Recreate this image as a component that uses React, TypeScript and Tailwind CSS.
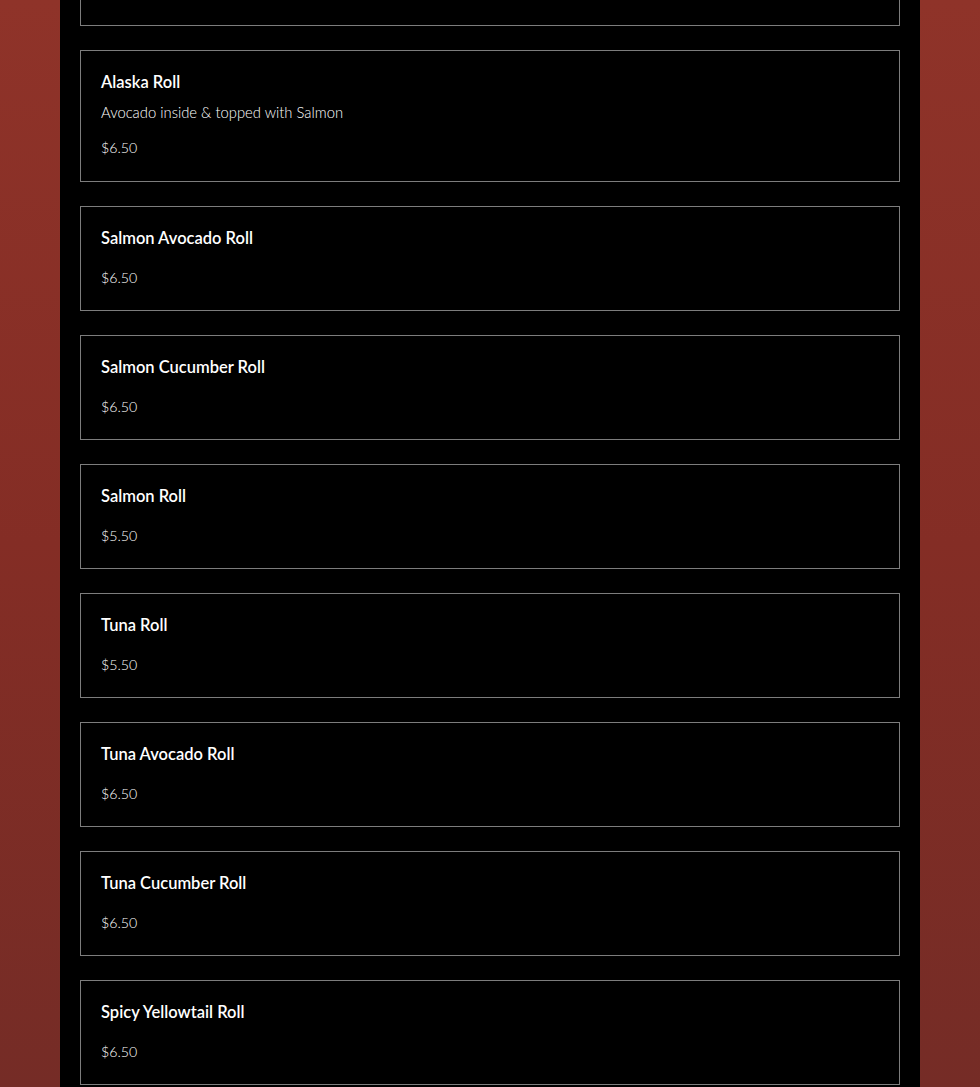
import React from "react";

type Item = { name: string; desc?: string; price: string };

const items: Item[] = [
  { name: "Alaska Roll", desc: "Avocado inside & topped with Salmon", price: "$6.50" },
  { name: "Salmon Avocado Roll", price: "$6.50" },
  { name: "Salmon Cucumber Roll", price: "$6.50" },
  { name: "Salmon Roll", price: "$5.50" },
  { name: "Tuna Roll", price: "$5.50" },
  { name: "Tuna Avocado Roll", price: "$6.50" },
  { name: "Tuna Cucumber Roll", price: "$6.50" },
  { name: "Spicy Yellowtail Roll", price: "$6.50" },
];

function Card({ item }: { item: Item }) {
  return (
    <div
      className={`border border-[#7d7d7d] pl-[20px] pr-[20px] pt-[20px] ${item.desc ? "pb-[23px]" : "pb-[22px]"}`}
    >
      <div className="text-[16.5px] leading-[22px] font-semibold text-white">{item.name}</div>
      {item.desc && (
        <div className="mt-[10px] text-[14.8px] leading-[18px] font-light text-white">{item.desc}</div>
      )}
      <div
        className={`${item.desc ? "mt-[17px]" : "mt-[19px]"} text-[14.2px] leading-[20px] font-light text-white`}
      >
        {item.price}
      </div>
    </div>
  );
}

export default function App() {
  return (
    <div
      className="h-[1087px] w-full overflow-hidden flex bg-gradient-to-b from-[#8f3329] via-[#842d25] to-[#752c26]"
      style={{ fontFamily: "Lato, 'Noto Sans', sans-serif" }}
    >
      <div className="ml-[60px] w-[860px] bg-black px-[20px] flex flex-col gap-[24px]">
        <div className="h-[26px] border-x border-b border-[#7d7d7d]" />
        {items.map((it) => (
          <Card key={it.name} item={it} />
        ))}
      </div>
    </div>
  );
}
